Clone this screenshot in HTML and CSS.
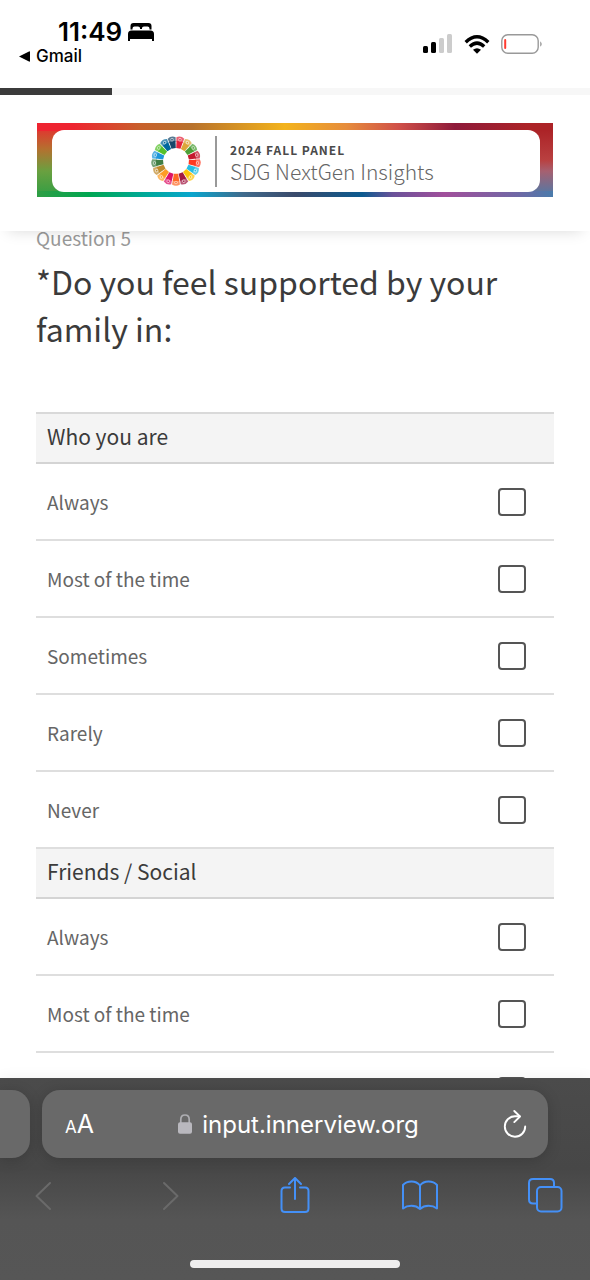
FILE: index.html
```html
<!DOCTYPE html>
<html lang="en">
<head>
<meta charset="utf-8">
<meta name="viewport" content="width=device-width, initial-scale=1">
<title>SDG NextGen Insights</title>
<link rel="stylesheet" href="styles.css">
</head>
<body>
<div class="status">
  <div class="status-left">
    <div class="clock"><span>11:49</span>
      <svg class="bed" viewBox="0 0 26 18" width="26" height="18" aria-hidden="true"><path d="M2.500 6.500V3Q2.500 0 5.500 0H20.500Q23.500 0 23.500 3V6.500H21.500V5.500Q21.500 3.500 19.500 3.500H16Q14 3.500 14 5V6H12V5Q12 3.500 10 3.500H6.500Q4.500 3.500 4.500 5.500V6.500Z"/><path d="M0 18V11Q0 7.500 3.500 7.500H22.500Q26 7.500 26 11V18H24V16H2V18Z"/></svg>
    </div>
    <a class="back" href="#"><svg viewBox="0 0 11 11" width="11" height="11" aria-hidden="true"><path d="M0 5.500 10 .5Q11 0 11 1V10Q11 11 10 10.500Z"/></svg>Gmail</a>
  </div>
  <div class="status-right">
    <svg viewBox="0 0 30 20" width="30" height="20" aria-hidden="true"><rect x="0" y="12" width="5" height="7" rx="1.500"/><rect x="8" y="8" width="5" height="11" rx="1.500"/><g fill="#ccc"><rect x="16" y="4" width="5" height="15" rx="1.500"/><rect x="24" y="0" width="5" height="19" rx="1.500"/></g></svg>
    <svg viewBox="0 0 26 19" width="26" height="19" aria-hidden="true"><g fill="none" stroke="#000" stroke-width="3.400"><path d="M1.700 7.200Q13-3.600 24.300 7.200"/><path d="M5.800 11.400Q13 4.800 20.200 11.400"/></g><path d="M9 14.700Q13 11.600 17 14.700L13 18.700Z"/></svg>
    <svg viewBox="0 0 42 20" width="42" height="20" aria-hidden="true"><rect x=".8" y=".8" width="36.400" height="18.400" rx="6" fill="none" stroke="#999" stroke-width="1.400"/><rect x="3.200" y="5" width="2" height="10" rx="1" fill="#ff3b30"/><path d="M39.300 7.200Q42 10 39.300 12.800Z" fill="#888"/></svg>
  </div>
</div>

<header class="survey-head">
  <progress class="progress" max="100" value="19" aria-label="Survey progress"></progress>
  <div class="banner">
    <div class="banner-inner">
      <svg class="wheel" viewBox="-26 -26 52 52" width="52" height="52" role="img" aria-label="SDG wheel">
        <defs><g id="seg"><path d="M-2.200-12.800H2.200L3.200-20H-3.200Z"/><path d="M-3.200-19 -4-23.500Q0-26.200 4-23.500L3.200-19Z" opacity=".72"/><circle cy="-21.600" r="1.700" fill="#fff" opacity=".6"/><circle cy="-21.600" r=".8"/></g></defs>
        <use href="#seg" fill="#e5243b" transform="rotate(10.600)"/>
        <use href="#seg" fill="#dda63a" transform="rotate(31.800)"/>
        <use href="#seg" fill="#4c9f38" transform="rotate(52.900)"/>
        <use href="#seg" fill="#c5192d" transform="rotate(74.100)"/>
        <use href="#seg" fill="#ff3a21" transform="rotate(95.300)"/>
        <use href="#seg" fill="#26bde2" transform="rotate(116.500)"/>
        <use href="#seg" fill="#fcc30b" transform="rotate(137.600)"/>
        <use href="#seg" fill="#a21942" transform="rotate(158.800)"/>
        <use href="#seg" fill="#fd6925" transform="rotate(180)"/>
        <use href="#seg" fill="#dd1367" transform="rotate(201.200)"/>
        <use href="#seg" fill="#fd9d24" transform="rotate(222.400)"/>
        <use href="#seg" fill="#bf8b2e" transform="rotate(243.500)"/>
        <use href="#seg" fill="#3f7e44" transform="rotate(264.700)"/>
        <use href="#seg" fill="#1d97d9" transform="rotate(285.900)"/>
        <use href="#seg" fill="#56c02b" transform="rotate(307.100)"/>
        <use href="#seg" fill="#00689d" transform="rotate(328.200)"/>
        <use href="#seg" fill="#19486a" transform="rotate(349.400)"/>
      </svg>
      <div class="banner-text">
        <div class="panel-name">2024 FALL PANEL</div>
        <div class="panel-title">SDG NextGen Insights</div>
      </div>
    </div>
  </div>
</header>

<main class="content">
  <p class="question-number">Question 5</p>
  <h1 class="question">*Do you feel supported by your family in:</h1>
  <div class="groups">
    <section>
      <h2 class="group-title">Who you are</h2>
      <label class="option"><span>Always</span><input type="checkbox" name="self" value="always"></label>
      <label class="option"><span>Most of the time</span><input type="checkbox" name="self" value="most"></label>
      <label class="option"><span>Sometimes</span><input type="checkbox" name="self" value="sometimes"></label>
      <label class="option"><span>Rarely</span><input type="checkbox" name="self" value="rarely"></label>
      <label class="option"><span>Never</span><input type="checkbox" name="self" value="never"></label>
    </section>
    <section>
      <h2 class="group-title">Friends / Social</h2>
      <label class="option"><span>Always</span><input type="checkbox" name="friends" value="always"></label>
      <label class="option"><span>Most of the time</span><input type="checkbox" name="friends" value="most"></label>
      <label class="option"><input type="checkbox" name="friends" value="sometimes" aria-label="Sometimes"></label>
    </section>
  </div>
</main>

<footer class="browser">
  <div class="address-row">
    <div class="tab-peek"></div>
    <div class="address">
      <button class="text-size" type="button" aria-label="Page settings"><span class="small-a">A</span><span>A</span></button>
      <button class="url" type="button"><svg viewBox="0 0 14 20" width="14" height="20" aria-hidden="true"><path d="M2.800 9V5.500Q2.800 1 7 1T11.200 5.500V9" fill="none" stroke="#aeaeb2" stroke-width="1.700"/><rect y="8.300" width="14" height="11.400" rx="2" fill="#b9b8be"/></svg>input.innerview.org</button>
      <button class="icon-button" type="button" aria-label="Reload"><svg viewBox="0 0 24 28" width="24" height="28" fill="none" stroke="#fff" stroke-width="1.900" stroke-linecap="round" stroke-linejoin="round" aria-hidden="true"><path d="M16.500 6.300H12A10.200 10.200 0 1 0 22.200 16.500"/><path d="M11.300 1 17 6.500 11.300 12.100"/></svg></button>
    </div>
  </div>
  <nav class="toolbar">
    <button class="icon-button" type="button" aria-label="Back" disabled><svg viewBox="0 0 36 36" width="36" height="36" aria-hidden="true"><path d="M24 6 10.500 19 24 32"/></svg></button>
    <button class="icon-button" type="button" aria-label="Forward" disabled><svg viewBox="0 0 36 36" width="36" height="36" aria-hidden="true"><path d="M13 6 26.500 19 13 32"/></svg></button>
    <button class="icon-button" type="button" aria-label="Share"><svg viewBox="0 0 36 36" width="36" height="36" aria-hidden="true"><path d="M13 10.500H8Q4.500 10.500 4.500 14V31.500Q4.500 35 8 35H28Q31.500 35 31.500 31.500V14Q31.500 10.500 28 10.500H23"/><path d="M18 22V1.500M12 7 18 1 24 7"/></svg></button>
    <button class="icon-button" type="button" aria-label="Bookmarks"><svg viewBox="0 0 36 36" width="36" height="36" aria-hidden="true"><path d="M18 8.500Q15 4.500 9.500 4.500T1 8V31.500Q4.500 28.800 9.500 28.800T18 32Q21.500 28.800 26.500 28.800T35 31.500V8Q32 4.500 26.500 4.500T18 8.500V32"/></svg></button>
    <button class="icon-button" type="button" aria-label="Tabs"><svg viewBox="0 0 36 36" width="36" height="36" aria-hidden="true"><path d="M9.500 26.500H6Q2 26.500 2 22.500V6Q2 2 6 2H23Q27 2 27 6V9.500"/><rect x="10" y="10" width="24.500" height="24.500" rx="4"/></svg></button>
  </nav>
  <div class="home-bar"></div>
</footer>
</body>
</html>
```
FILE: styles.css
```css
* { box-sizing: border-box; }

body {
  margin: 0;
  height: 100vh;
  display: flex;
  flex-direction: column;
  overflow: hidden;
  background: #fff;
  color: #3b3b3b;
  font-family: "Source Sans Pro", "Noto Sans CJK SC", sans-serif;
}

button {
  padding: 0;
  border: 0;
  background: none;
  color: inherit;
  font: inherit;
}

svg { display: block; flex: none; }

.status {
  flex: none;
  display: flex;
  justify-content: space-between;
  align-items: flex-start;
  padding: 18px 47px 22px 19px;
  color: #000;
  font-family: Inter, sans-serif;
}

.clock {
  display: flex;
  align-items: center;
  gap: 6px;
  margin-left: 39px;
  font-size: 26px;
  font-weight: 600;
  line-height: 28px;
}

.back {
  display: flex;
  align-items: center;
  gap: 6px;
  color: #000;
  font-size: 17px;
  font-weight: 500;
  line-height: 20px;
  text-decoration: none;
}

.status-right {
  display: flex;
  align-items: center;
  gap: 11px;
  padding-top: 16px;
}

.survey-head {
  position: relative;
  z-index: 1;
  flex: none;
  padding-bottom: 34px;
  background: #fff;
  box-shadow: 0 8px 14px -8px rgba(0, 0, 0, .15);
}

.progress {
  display: block;
  width: 100%;
  height: 7px;
  border: 0;
  appearance: none;
  background: #f7f7f7;
}
.progress::-webkit-progress-bar { background: #f7f7f7; }
.progress::-webkit-progress-value { background: #3b3b3b; }

.banner {
  margin: 28px 37px 0;
  padding: 7px 13px 5px 15px;
  background:
    linear-gradient(90deg, #ee2430 7%, #c8602b 20%, #b8722c 30%, #f3b31c 48%, #e68c3c 60%, #d05048 70%, #8e1a3a 81%, #ac2327 95%) top / 100% 8px no-repeat,
    linear-gradient(90deg, #2f9e44, #00a651 10%, #00a9a0 22%, #0aa5cd 30%, #3f6a8c 40%, #3a4a6b 50%, #0b5a8f 63%, #6a5299 69%, #a14f9b 79%, #7068a5 93%, #4a7bab) bottom / 100% 6px no-repeat,
    linear-gradient(#ee2430, #b5702f 35%, #6aa040 65%, #2f9e44) left / 50% 100% no-repeat,
    linear-gradient(#ac2327 10%, #b94040 50%, #a66070 65%, #4a7bab) right / 50% 100% no-repeat;
}

.banner-inner {
  display: flex;
  align-items: center;
  gap: 13px;
  padding: 5px 98px;
  border-radius: 12px;
  background: #fff;
}

.banner-text {
  padding: 4px 0 5px 13px;
  border-left: 2px solid #999;
  white-space: nowrap;
}

.panel-name {
  font-size: 12px;
  font-weight: 700;
  line-height: 20px;
  letter-spacing: 1px;
  color: #4a4a4a;
}

.panel-title {
  font-size: 21px;
  font-weight: 300;
  line-height: 22px;
  color: #666;
}

.content {
  flex: 1;
  min-height: 0;
  overflow: hidden;
  margin-top: -16px;
  padding: 10px 36px 0;
}

.question-number {
  margin: 0;
  font-size: 19px;
  line-height: 26px;
  color: #999;
}

.question {
  margin: 7px 0 60px;
  font-size: 32px;
  font-weight: 400;
  line-height: 47px;
}

.groups { border-top: 2px solid #d9d9d9; }

.group-title {
  margin: 0;
  padding: 0 11px 4px;
  border-bottom: 2px solid #d4d4d4;
  background: #f4f4f4;
  font-size: 21px;
  font-weight: 400;
  line-height: 44px;
}

.option {
  display: flex;
  align-items: center;
  justify-content: space-between;
  min-height: 77px;
  padding: 0 28px 0 11px;
  border-bottom: 2px solid #dedede;
  font-size: 19px;
  color: #666;
}

.option input {
  width: 28px;
  height: 28px;
  margin: 0 0 0 auto;
  appearance: none;
  border: 2px solid #555;
  border-radius: 4px;
  background: #fff;
}

.browser {
  position: relative;
  z-index: 1;
  flex: none;
  padding: 12px 0;
  background: linear-gradient(#4b4b4b, #474747 45%, #555 70%, #565656);
  box-shadow: 0 0 14px rgba(0, 0, 0, .06);
  color: #fff;
  font-family: Inter, sans-serif;
}

.address-row {
  display: flex;
  gap: 12px;
  padding-right: 42px;
}

.tab-peek {
  width: 30px;
  border-radius: 0 18px 18px 0;
  background: #696969;
  box-shadow: 0 2px 14px rgba(0, 0, 0, .18);
}

.address {
  flex: 1;
  display: flex;
  align-items: center;
  justify-content: space-between;
  height: 68px;
  padding: 0 21px 0 23px;
  border-radius: 18px;
  background: #696969;
  box-shadow: 0 2px 14px rgba(0, 0, 0, .18);
}

.text-size { font-size: 25px; }
.small-a { font-size: 17px; }

.url {
  display: flex;
  align-items: center;
  gap: 10px;
  font-size: 24px;
}

.toolbar {
  display: flex;
  justify-content: space-between;
  padding: 19px 27px 47px 26px;
}

.toolbar svg {
  fill: none;
  stroke: #4490f7;
  stroke-width: 2;
  stroke-linecap: round;
  stroke-linejoin: round;
}
.toolbar button:disabled svg { stroke: #6a6a6a; }

.home-bar {
  width: 210px;
  height: 8px;
  margin: 0 auto;
  border-radius: 4px;
  background: #efeeee;
}
```
